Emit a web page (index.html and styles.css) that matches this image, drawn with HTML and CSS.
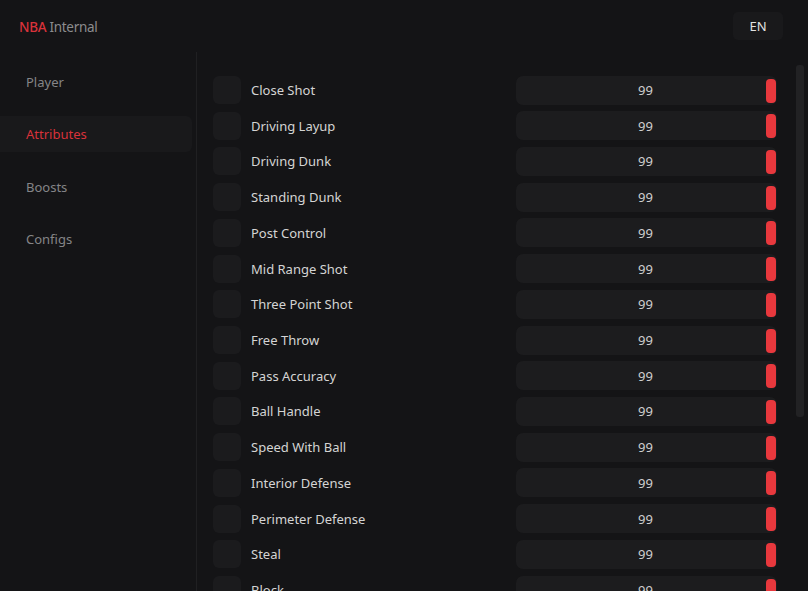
FILE: index.html
```html
<!DOCTYPE html>
<html>
<head>
<meta charset="utf-8">
<link rel="stylesheet" href="styles.css">
</head>
<body>
<div class="app">
  <header class="topbar">
    <div class="logo"><span class="logo-nba">NBA</span> <span class="logo-int">Internal</span></div>
    <button class="lang">EN</button>
  </header>
  <div class="body">
    <nav class="sidebar">
      <div class="nav-item">Player</div>
      <div class="nav-item active">Attributes</div>
      <div class="nav-item">Boosts</div>
      <div class="nav-item">Configs</div>
    </nav>
    <main class="content">
      <div class="list">
        <div class="row"><div class="check"></div><div class="label">Close Shot</div><div class="slider"><span class="val">99</span><span class="handle"></span></div></div>
        <div class="row"><div class="check"></div><div class="label">Driving Layup</div><div class="slider"><span class="val">99</span><span class="handle"></span></div></div>
        <div class="row"><div class="check"></div><div class="label">Driving Dunk</div><div class="slider"><span class="val">99</span><span class="handle"></span></div></div>
        <div class="row"><div class="check"></div><div class="label">Standing Dunk</div><div class="slider"><span class="val">99</span><span class="handle"></span></div></div>
        <div class="row"><div class="check"></div><div class="label">Post Control</div><div class="slider"><span class="val">99</span><span class="handle"></span></div></div>
        <div class="row"><div class="check"></div><div class="label">Mid Range Shot</div><div class="slider"><span class="val">99</span><span class="handle"></span></div></div>
        <div class="row"><div class="check"></div><div class="label">Three Point Shot</div><div class="slider"><span class="val">99</span><span class="handle"></span></div></div>
        <div class="row"><div class="check"></div><div class="label">Free Throw</div><div class="slider"><span class="val">99</span><span class="handle"></span></div></div>
        <div class="row"><div class="check"></div><div class="label">Pass Accuracy</div><div class="slider"><span class="val">99</span><span class="handle"></span></div></div>
        <div class="row"><div class="check"></div><div class="label">Ball Handle</div><div class="slider"><span class="val">99</span><span class="handle"></span></div></div>
        <div class="row"><div class="check"></div><div class="label">Speed With Ball</div><div class="slider"><span class="val">99</span><span class="handle"></span></div></div>
        <div class="row"><div class="check"></div><div class="label">Interior Defense</div><div class="slider"><span class="val">99</span><span class="handle"></span></div></div>
        <div class="row"><div class="check"></div><div class="label">Perimeter Defense</div><div class="slider"><span class="val">99</span><span class="handle"></span></div></div>
        <div class="row"><div class="check"></div><div class="label">Steal</div><div class="slider"><span class="val">99</span><span class="handle"></span></div></div>
        <div class="row"><div class="check"></div><div class="label">Block</div><div class="slider"><span class="val">99</span><span class="handle"></span></div></div>
      </div>
      <div class="scroll-thumb"></div>
    </main>
  </div>
</div>
</body>
</html>
```
FILE: styles.css
```css
* { box-sizing: border-box; }
html, body {
  margin: 0;
  padding: 0;
  background: #141416;
  overflow: hidden;
}
body {
  font-family: "Noto Sans", "Open Sans", sans-serif;
  color: #d6d6d6;
}
.app {
  width: 808px;
  height: 591px;
  display: flex;
  flex-direction: column;
  background: #141416;
}
.topbar {
  height: 52px;
  flex: 0 0 52px;
  display: flex;
  align-items: center;
  justify-content: space-between;
  padding: 0 25px 0 19px;
}
.logo {
  font-size: 13.5px;
  letter-spacing: -0.3px;
  padding-top: 1px;
}
.logo-nba { color: #d8323a; font-weight: 500; }
.logo-int { color: #8c8c8e; }
.lang {
  width: 50px;
  height: 28px;
  margin-top: -1px;
  border: none;
  border-radius: 5px;
  background: #19191b;
  color: #e2e2e2;
  font-family: "Noto Sans", sans-serif;
  font-size: 13px;
  padding: 0;
}
.body {
  flex: 1;
  display: flex;
  min-height: 0;
}
.sidebar {
  width: 197px;
  flex: 0 0 197px;
  border-right: 1px solid #202022;
  padding: 12px 4px 0 0;
  display: flex;
  flex-direction: column;
  gap: 16.3px;
}
.nav-item {
  height: 36px;
  display: flex;
  align-items: center;
  padding-left: 26px;
  font-size: 13px;
  color: #858587;
  border-radius: 0 6px 6px 0;
}
.nav-item.active {
  background: #19191b;
  color: #d8323a;
}
.content {
  flex: 1;
  position: relative;
  overflow: hidden;
  padding: 23px 0 0 16px;
}
.list {
  display: flex;
  flex-direction: column;
  gap: 5.72px;
}
.row {
  height: 30px;
  display: flex;
  align-items: center;
}
.check {
  width: 28px;
  height: 28px;
  flex: 0 0 28px;
  border-radius: 6px;
  background: #1b1b1d;
}
.label {
  width: 275px;
  padding-left: 10px;
  font-size: 13px;
  color: #d4d4d4;
}
.slider {
  position: relative;
  width: 261px;
  height: 29px;
  border-radius: 7px;
  background: #1c1c1e;
  display: flex;
  align-items: center;
  justify-content: center;
}
.val {
  font-size: 13px;
  color: #cfcfcf;
  margin-left: -2px;
}
.handle {
  position: absolute;
  right: 1px;
  top: 3px;
  width: 10px;
  height: 24px;
  border-radius: 4px;
  background: #e8383d;
}
.scroll-thumb {
  position: absolute;
  right: 4px;
  top: 13px;
  width: 8px;
  height: 352px;
  border-radius: 3px;
  background: #222224;
}
```
